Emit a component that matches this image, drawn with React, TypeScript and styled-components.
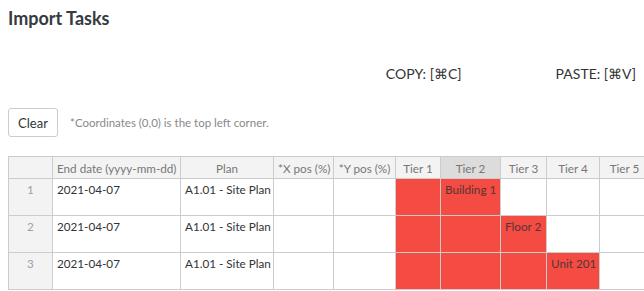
import styled, { createGlobalStyle } from "styled-components";

const GlobalStyle = createGlobalStyle`
  html, body {
    margin: 0;
    padding: 0;
    background: #ffffff;
    overflow: hidden;
  }
  body {
    font-family: Lato, "Open Sans", "Liberation Sans", sans-serif;
    color: #333333;
  }
`;

const Page = styled.div`
  width: 644px;
  height: 291px;
  padding: 0 0 0 8px;
  box-sizing: border-box;
  overflow: hidden;
`;

const Title = styled.h1`
  margin: 0;
  padding-top: 6px;
  font-size: 18px;
  line-height: 24px;
  font-weight: 700;
  color: #363a41;
`;

const ShortcutBar = styled.div`
  display: flex;
  justify-content: flex-end;
  gap: 94px;
  padding-right: 8px;
  margin-top: 33px;
  height: 20px;
  align-items: center;
`;

const Shortcut = styled.span`
  font-size: 14px;
  color: #333333;
`;

const Toolbar = styled.div`
  display: flex;
  align-items: center;
  gap: 12px;
  margin-top: 25px;
`;

const Button = styled.button`
  font-family: inherit;
  font-size: 13px;
  color: #333333;
  background: #ffffff;
  border: 1px solid #cccccc;
  border-radius: 3px;
  width: 50px;
  height: 29px;
  padding: 0;
`;

const Note = styled.span`
  font-size: 11.5px;
  color: #888888;
`;

const Table = styled.table`
  margin-top: 19px;
  border-collapse: collapse;
  table-layout: fixed;
  width: 641px;
  font-size: 11.7px;
`;

const Head = styled.th<{ $selected?: boolean }>`
  border: 1px solid #cccccc;
  background: ${(p) => (p.$selected ? "#dcdcdc" : "#f3f3f3")};
  color: #777777;
  font-weight: 400;
  height: 21px;
  padding: 0 4px;
  text-align: center;
  white-space: nowrap;
  overflow: hidden;
`;

const RowNum = styled.td`
  border: 1px solid #cccccc;
  background: #f3f3f3;
  color: #a0a0a0;
  text-align: center;
  vertical-align: top;
  line-height: 21px;
  height: 36px;
  padding: 0 4px;
`;

const Cell = styled.td<{ $filled?: boolean }>`
  border: 1px solid #cccccc;
  background: ${(p) => (p.$filled ? "#f44b43" : "#ffffff")};
  color: ${(p) => (p.$filled ? "#543636" : "#333333")};
  vertical-align: top;
  line-height: 21px;
  height: 36px;
  padding: 0 4px;
  white-space: nowrap;
  overflow: hidden;
`;

const columns = [
  { label: "", width: 44 },
  { label: "End date (yyyy-mm-dd)", width: 128 },
  { label: "Plan", width: 93 },
  { label: "*X pos (%)", width: 60 },
  { label: "*Y pos (%)", width: 62 },
  { label: "Tier 1", width: 45 },
  { label: "Tier 2", width: 60 },
  { label: "Tier 3", width: 46 },
  { label: "Tier 4", width: 53 },
  { label: "Tier 5", width: 50 },
];

const rows = [
  { tiers: ["", "Building 1", "", "", ""], depth: 2 },
  { tiers: ["", "", "Floor 2", "", ""], depth: 3 },
  { tiers: ["", "", "", "Unit 201", ""], depth: 4 },
];

export default function App() {
  return (
    <Page>
      <GlobalStyle />
      <Title>Import Tasks</Title>
      <ShortcutBar>
        <Shortcut>COPY: [⌘C]</Shortcut>
        <Shortcut>PASTE: [⌘V]</Shortcut>
      </ShortcutBar>
      <Toolbar>
        <Button>Clear</Button>
        <Note>*Coordinates (0,0) is the top left corner.</Note>
      </Toolbar>
      <Table>
        <colgroup>
          {columns.map((c, i) => (
            <col key={i} style={{ width: c.width }} />
          ))}
        </colgroup>
        <thead>
          <tr>
            {columns.map((c, i) => (
              <Head key={i} $selected={c.label === "Tier 2"}>
                {c.label}
              </Head>
            ))}
          </tr>
        </thead>
        <tbody>
          {rows.map((r, i) => (
            <tr key={i}>
              <RowNum>{i + 1}</RowNum>
              <Cell>2021-04-07</Cell>
              <Cell>A1.01 - Site Plan</Cell>
              <Cell />
              <Cell />
              {r.tiers.map((t, j) => (
                <Cell key={j} $filled={j < r.depth}>
                  {t}
                </Cell>
              ))}
            </tr>
          ))}
        </tbody>
      </Table>
    </Page>
  );
}
